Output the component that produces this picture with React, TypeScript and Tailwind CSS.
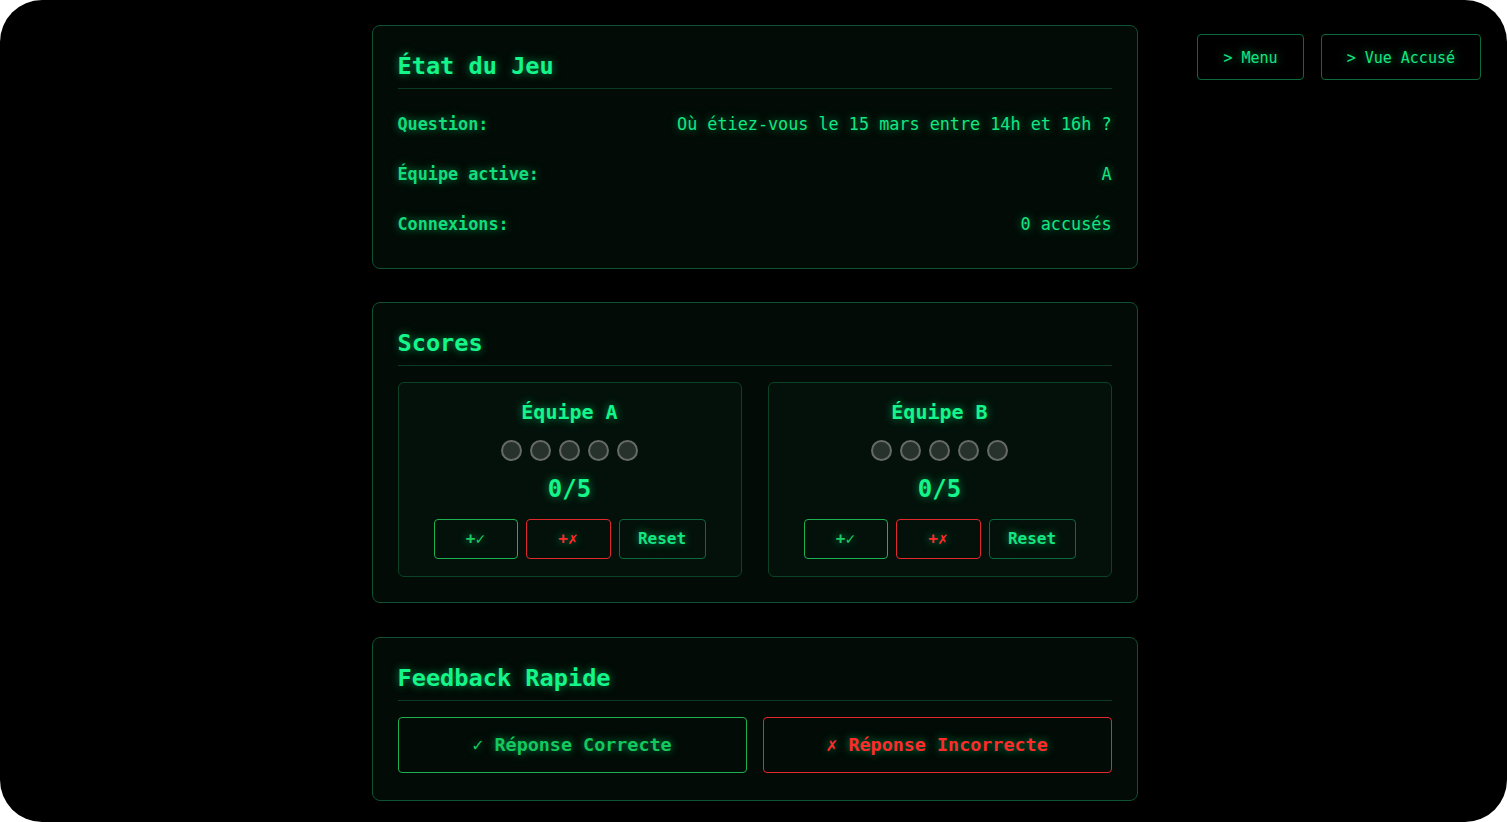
import React, { useState } from 'react';

const glow = "[text-shadow:0_0_9px_rgba(0,255,136,0.55)]";

type Team = { name: string; score: number };

const Card = ({ title, children, className = "" }: { title: string; children: React.ReactNode; className?: string }) => (
  <div className={`border border-[#0d5232] rounded-lg bg-[#020b06] px-[25px] pt-[25px] pb-[25px] ${className}`}>
    <h2 className={`text-[23.6px] leading-[28px] font-bold text-[#14f58a] pt-px pb-2 border-b border-[#0b3a24] ${glow}`}>
      {title}
    </h2>
    {children}
  </div>
);

const TeamBox = ({ team, onAdd, onMiss, onReset }: { team: Team; onAdd: () => void; onMiss: () => void; onReset: () => void }) => (
  <div className="border border-[#0b4228] rounded-md bg-[#03110a] pt-[17px] pb-[17px] flex flex-col items-center">
    <h3 className={`text-[20px] leading-[24px] font-bold text-[#14f58a] ${glow}`}>{team.name}</h3>
    <div className="flex gap-2 mt-4">
      {[0, 1, 2, 3, 4].map((i) => (
        <span
          key={i}
          className={`w-[21px] h-[21px] rounded-full border-2 ${
            i < team.score ? "bg-[#14f58a] border-[#14f58a]" : "bg-[#28322d] border-[#666a68]"
          }`}
        />
      ))}
    </div>
    <div className={`text-[24px] leading-[28px] font-bold text-[#14f58a] mt-[14px] ${glow}`}>{team.score}/5</div>
    <div className="flex gap-2 mt-4">
      <button onClick={onAdd} className={`w-[84px] h-10 border border-[#1db04e] rounded text-[16px] font-bold text-[#1ec864] ${glow}`}>
        +✓
      </button>
      <button onClick={onMiss} className={`w-[85px] h-10 border border-[#e3282c] rounded text-[16px] font-bold text-[#ff2b2b] ${glow}`}>
        +✗
      </button>
      <button onClick={onReset} className={`w-[87px] h-10 border border-[#0e6a3e] rounded text-[16px] font-bold text-[#14e682] ${glow}`}>
        Reset
      </button>
    </div>
  </div>
);

const App = () => {
  const [teams, setTeams] = useState<Team[]>([
    { name: "Équipe A", score: 0 },
    { name: "Équipe B", score: 0 },
  ]);

  const setScore = (idx: number, fn: (s: number) => number) => {
    setTeams((prev) => prev.map((t, i) => (i === idx ? { ...t, score: Math.max(0, Math.min(5, fn(t.score))) } : t)));
  };

  const rows = [
    ["Question:", "Où étiez-vous le 15 mars entre 14h et 16h ?"],
    ["Équipe active:", "A"],
    ["Connexions:", "0 accusés"],
  ];

  return (
    <div className="bg-white min-h-screen">
      <div
        className="relative bg-black h-[822px] rounded-[42px] overflow-hidden"
        style={{ fontFamily: '"DejaVu Sans Mono", "Liberation Mono", monospace' }}
      >
        <div className="absolute top-[34px] right-[26px] flex gap-[17px]">
          <button className={`h-[46px] pt-[2px] px-[25px] border border-[#0d6a3c] rounded text-[15px] text-[#14e682] ${glow}`}>
            &gt; Menu
          </button>
          <button className={`h-[46px] pt-[2px] px-[25px] border border-[#0d6a3c] rounded text-[15px] text-[#14e682] ${glow}`}>
            &gt; Vue Accusé
          </button>
        </div>

        <div className="pl-[2px]">
          <div className="w-[766px] mx-auto pt-[25px] flex flex-col gap-[33px]">
            <Card title="État du Jeu" className="!pb-[30px]">
              <div className="mt-[23px] flex flex-col gap-6">
                {rows.map(([label, value]) => (
                  <div key={label} className="flex justify-between items-center h-[26px] text-[16.8px]">
                    <span className={`font-bold text-[#14dc7c] ${glow}`}>{label}</span>
                    <span className={`text-[#14e682] ${glow}`}>{value}</span>
                  </div>
                ))}
              </div>
            </Card>

            <Card title="Scores">
              <div className="mt-4 grid grid-cols-2 gap-[26px]">
                {teams.map((team, idx) => (
                  <TeamBox
                    key={team.name}
                    team={team}
                    onAdd={() => setScore(idx, (s) => s + 1)}
                    onMiss={() => setScore(idx, (s) => s)}
                    onReset={() => setScore(idx, () => 0)}
                  />
                ))}
              </div>
            </Card>

            <Card title="Feedback Rapide" className="mt-px !pb-[27px]">
              <div className="mt-4 grid grid-cols-2 gap-4">
                <button className={`h-14 border border-[#1db04e] rounded text-[18.4px] font-bold text-[#14c85e] ${glow}`}>
                  ✓ Réponse Correcte
                </button>
                <button className={`h-14 border border-[#e3282c] rounded text-[18.4px] font-bold text-[#ff2b2b] ${glow}`}>
                  ✗ Réponse Incorrecte
                </button>
              </div>
            </Card>
          </div>
        </div>
      </div>
    </div>
  );
};

export default App;
